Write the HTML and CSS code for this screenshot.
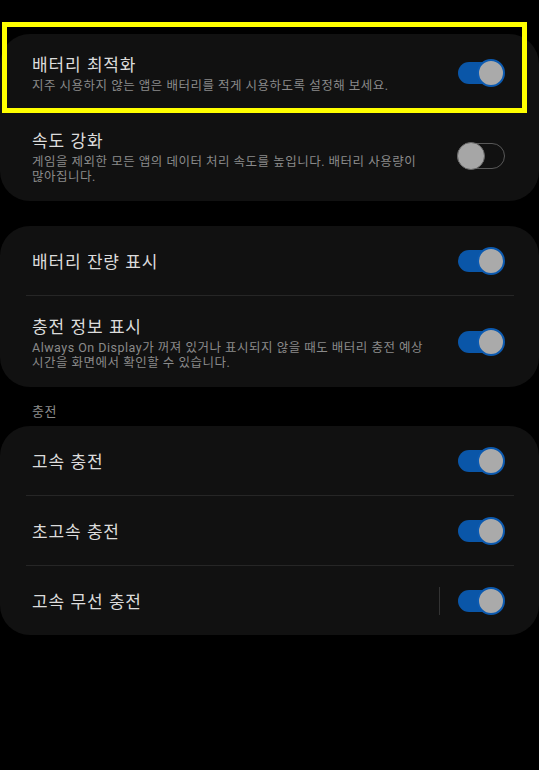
FILE: index.html
```html
<!DOCTYPE html>
<html lang="ko">
<head>
    <meta charset="UTF-8">
    <meta name="viewport" content="width=device-width, initial-scale=1.0">
    <title>배터리</title>
    <link rel="stylesheet" href="styles.css">
</head>
<body>
    <div class="page">
        <div class="card">
            <div class="row highlighted">
                <div class="text">
                    <div class="title">배터리 최적화</div>
                    <div class="sub">지주 시용하지 않는 앱은 배터리를 적게 시용하도록 설정해 보세요.</div>
                </div>
                <span class="toggle on"><span class="track"></span><span class="thumb"></span></span>
                <div class="focus-box"></div>
            </div>
            <div class="row">
                <div class="text">
                    <div class="title">속도 강화</div>
                    <div class="sub">게임을 제외한 모든 앱의 데이터 처리 속도를 높입니다. 배터리 사용량이 많아집니다.</div>
                </div>
                <span class="toggle off"><span class="track"></span><span class="thumb"></span></span>
            </div>
        </div>

        <div class="card">
            <div class="row">
                <div class="text">
                    <div class="title">배터리 잔량 표시</div>
                </div>
                <span class="toggle on"><span class="track"></span><span class="thumb"></span></span>
            </div>
            <div class="divider"></div>
            <div class="row">
                <div class="text">
                    <div class="title">충전 정보 표시</div>
                    <div class="sub">Always On Display가 꺼져 있거나 표시되지 않을 때도 배터리 충전 예상 시간을 화면에서 확인할 수 있습니다.</div>
                </div>
                <span class="toggle on"><span class="track"></span><span class="thumb"></span></span>
            </div>
        </div>

        <div class="section-label">충전</div>

        <div class="card">
            <div class="row">
                <div class="text">
                    <div class="title">고속 충전</div>
                </div>
                <span class="toggle on"><span class="track"></span><span class="thumb"></span></span>
            </div>
            <div class="divider"></div>
            <div class="row">
                <div class="text">
                    <div class="title">초고속 충전</div>
                </div>
                <span class="toggle on"><span class="track"></span><span class="thumb"></span></span>
            </div>
            <div class="divider"></div>
            <div class="row">
                <div class="text">
                    <div class="title">고속 무선 충전</div>
                </div>
                <span class="vline"></span>
                <span class="toggle on"><span class="track"></span><span class="thumb"></span></span>
            </div>
        </div>
    </div>
</body>
</html>
```

FILE: styles.css
```css
body {
    margin: 0;
    padding: 0;
    background-color: #000;
    font-family: Roboto, "Noto Sans CJK KR", sans-serif;
}

.page {
    width: 539px;
    padding-top: 34px;
}

.card {
    background-color: #111111;
    border-radius: 30px;
    margin-bottom: 25px;
}

.row {
    position: relative;
    display: flex;
    align-items: center;
    box-sizing: border-box;
    min-height: 69px;
    padding: 18px 34px 17px 32px;
}

.text {
    flex: 1;
    padding-right: 18px;
    word-break: keep-all;
}

.title {
    font-family: "Noto Sans CJK KR", sans-serif;
    font-size: 17px;
    line-height: 24px;
    letter-spacing: 0.8px;
    color: #dcdcdc;
}

.sub {
    margin-top: 2px;
    font-size: 12.5px;
    line-height: 15px;
    letter-spacing: 0.5px;
    color: #8a8a8a;
}

.divider {
    height: 1px;
    margin: 0 25px 0 26px;
    background-color: #262626;
}

.section-label {
    font-family: "Noto Sans CJK KR", sans-serif;
    font-size: 13px;
    line-height: 17px;
    letter-spacing: 0.5px;
    color: #8c8c8c;
    padding: 0 0 7px 32px;
    margin-top: -10px;
}

.vline {
    width: 1px;
    height: 28px;
    background-color: #333;
    margin-right: 17px;
}

.toggle {
    position: relative;
    flex: none;
    width: 48px;
    height: 28px;
}

.toggle .track {
    position: absolute;
    box-sizing: border-box;
}

.toggle .thumb {
    position: absolute;
    top: 0;
    box-sizing: border-box;
    width: 28px;
    height: 28px;
    border-radius: 50%;
    background-color: #aaaaaa;
}

.toggle.on .track {
    left: 1px;
    top: 3px;
    width: 40px;
    height: 22px;
    border-radius: 11px;
    background-color: #0a56a8;
}

.toggle.on .thumb {
    right: 0;
    border: 2px solid #0c5ab0;
}

.toggle.off .track {
    left: 0;
    top: 1px;
    width: 48px;
    height: 26px;
    border-radius: 13px;
    border: 1.5px solid #585858;
}

.toggle.off .thumb {
    left: 0;
    background-color: #a6a6a6;
    border: 1.5px solid #666;
}

.focus-box {
    position: absolute;
    left: 2px;
    top: -12px;
    width: 525px;
    height: 91px;
    box-sizing: border-box;
    border: 5px solid #ffff00;
}
```
